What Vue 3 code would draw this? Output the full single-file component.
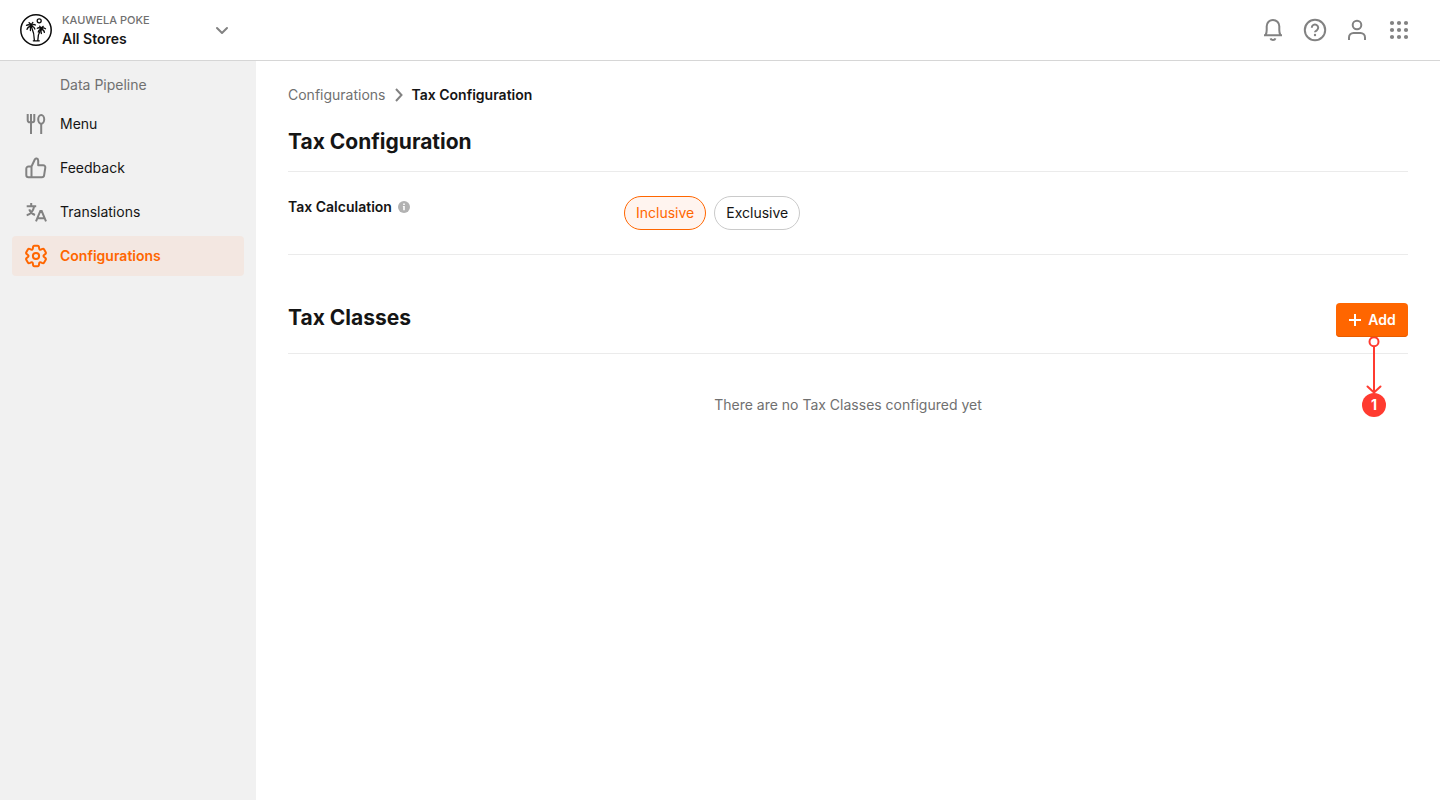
<script setup>
import { ref } from 'vue'

const calculation = ref('Inclusive')
const options = ['Inclusive', 'Exclusive']

// Six-toothed gear outline: one tooth profile rotated around the centre.
function gearPath() {
  const place = (x, y, deg) => {
    const a = (deg * Math.PI) / 180
    const px = 12 + x * Math.cos(a) - y * Math.sin(a)
    const py = 12 + x * Math.sin(a) + y * Math.cos(a)
    return `${px.toFixed(2)} ${py.toFixed(2)}`
  }
  let d = `M${place(-1.6, -10.3, 0)}`
  for (let deg = 0; deg < 360; deg += 60) {
    d += `L${place(1.6, -10.3, deg)}Q${place(2.9, -10.3, deg)} ${place(3, -8.5, deg)}`
    d += `Q${place(3, -5.2, deg)} ${place(-3, -8.5, deg + 60)}`
    d += `Q${place(-2.9, -10.3, deg + 60)} ${place(-1.6, -10.3, deg + 60)}`
  }
  return d + 'z'
}
const gear = gearPath()
</script>

<template>
  <div class="app">
    <header class="topbar">
      <button class="store" type="button">
        <svg class="logo" viewBox="0 0 32 32" width="32" height="32" fill="none" stroke="#0b0b0b" stroke-linecap="round" aria-hidden="true">
          <circle cx="16" cy="16" r="15.2" stroke-width="1.5" />
          <circle cx="19.200" cy="6.800" r="2" stroke-width="1.300" />
          <path d="M11.500 13c1.800 4 2.900 8 2.900 13.500M20.500 16c-1.800 3-2.700 6-2.700 10.500M13.300 26.800h6" stroke-width="1.300" />
          <path d="M11.300 12.300C10 10.500 8.500 10.300 6.500 11.300M11.300 12.300C9 12.300 7.500 13.300 7 15.300M11.300 12.300c-1 1.400-1.300 2.700-.9 4.200M11.300 12.300c1-1.800 2.500-2.300 4.200-1.300M11.300 12.300c2 .1 3.200 1 3.500 2.700M11.300 12.300c-.3-1.800-1.100-3-2.300-3.600M11.300 12.300c0-2 .5-3 1.500-3.800" stroke-width="1.300" />
          <path d="M21.200 15.300c-1-1.600-2.300-1.900-3.900-1M21.200 15.300c-1.800.2-2.700 1.200-2.900 2.700M21.200 15.300c-.4 1.500-.3 2.900.2 4.200M21.200 15.300c1-1.600 2.600-1.700 4.300-.6M21.200 15.300c2 .1 3 1.300 3.200 3M21.200 15.300c-.2-1.500-.7-2.500-1.500-3.100M21.200 15.300c.2-1.700.9-2.600 2-3" stroke-width="1.300" />
        </svg>
        <span class="store-text">
          <span class="brand">KAUWELA POKE</span>
          <span class="scope">All Stores</span>
        </span>
        <svg viewBox="0 0 16 16" width="16" height="16" fill="none" stroke="#828282" stroke-width="2" stroke-linecap="round" stroke-linejoin="round" aria-hidden="true"><path d="M3 6l5 5 5-5" /></svg>
      </button>
      <div class="actions">
        <button type="button" aria-label="Notifications">
          <svg viewBox="0 0 24 24"><path d="M3 17.200h18M4.700 17c.7-1.700 1-3.200 1-5V8.200a6.300 6.300 0 0 1 12.600 0V12c0 1.800.3 3.300 1 5M9.500 20.300c.8 2.100 4.200 2.100 5 0" /></svg>
        </button>
        <button type="button" aria-label="Help">
          <svg viewBox="0 0 24 24"><circle cx="12" cy="12" r="10.200" /><path d="M8.800 9.800a3.200 3.200 0 1 1 5 2.500c-1.100.7-1.800 1-1.800 2" /><circle cx="12" cy="17" r="1.200" fill="currentColor" stroke="none" /></svg>
        </button>
        <button type="button" aria-label="Account">
          <svg viewBox="0 0 24 24"><circle cx="12" cy="7" r="4.300" /><path d="M4 22v-2.500a4.500 4.500 0 0 1 4.500-4.500h7a4.500 4.500 0 0 1 4.500 4.500V22" /></svg>
        </button>
        <button type="button" aria-label="Apps">
          <svg viewBox="0 0 24 24"><g fill="currentColor" stroke="none"><template v-for="y in [5, 12, 19]" :key="y"><circle v-for="x in [5, 12, 19]" :key="x" :cx="x" :cy="y" r="2.100" /></template></g></svg>
        </button>
      </div>
    </header>

    <div class="body">
      <nav class="sidebar" aria-label="Main">
        <a class="sub" href="#">Data Pipeline</a>
        <a class="item" href="#">
          <svg viewBox="0 0 24 24"><path d="M3.700 2v6.300a2 2 0 0 0 2 2h2.600a2 2 0 0 0 2-2V2M7 2v20M17.200 12v10" /><ellipse cx="17.200" cy="7.300" rx="3" ry="4.400" /></svg>
          Menu
        </a>
        <a class="item" href="#">
          <svg viewBox="0 0 24 24" stroke-linejoin="round"><path d="M7.500 10.500v10.800M7.500 10.500l3.300-7c.6-1.700 3.400-1.200 3.400 1.200v4.500h4.900a2.200 2.200 0 0 1 2.200 2.500l-1.200 7.700a2.200 2.200 0 0 1-2.200 1.900H4.500a2.200 2.200 0 0 1-2.200-2.200v-6.400a2.200 2.200 0 0 1 2.200-2.200z" /></svg>
          Feedback
        </a>
        <a class="item" href="#">
          <svg viewBox="0 0 24 24"><path d="M2.700 6.300h9.500M7.200 3v3.300M2.700 15.200c4-.9 6.500-4 7.500-8.900M5.200 9.300c1 2.500 3 4.700 5.800 5.700M12 21.300l4.300-10.300h1.400l4.300 10.300M13.500 18.200h7" /></svg>
          Translations
        </a>
        <a class="item active" href="#" aria-current="page">
          <svg viewBox="0 0 24 24" stroke-linejoin="round"><circle cx="12" cy="12" r="3.100" /><path :d="gear" /></svg>
          Configurations
        </a>
      </nav>

      <main class="content">
        <nav class="crumbs" aria-label="Breadcrumb">
          <a href="#">Configurations</a>
          <svg viewBox="0 0 14 14" width="14" height="14" fill="none" stroke="#828282" stroke-width="2" aria-hidden="true"><path d="M4 1l5.500 6L4 13" /></svg>
          <span aria-current="page">Tax Configuration</span>
        </nav>

        <h1>Tax Configuration</h1>

        <fieldset class="setting">
          <legend class="hidden">Tax Calculation</legend>
          <div class="setting-name">
            Tax Calculation
            <svg viewBox="0 0 12 12" width="12" height="12" aria-hidden="true"><circle cx="6" cy="6" r="6" fill="#b2b2b2" /><path d="M5.200 2.400h1.600v1.500H5.200zM4.900 5h1.900v4.300H5.200V6h-.3z" fill="#fff" /></svg>
          </div>
          <div class="choices">
            <label v-for="o in options" :key="o" :class="['choice', { selected: calculation === o }]">
              <input v-model="calculation" class="hidden" type="radio" name="calculation" :value="o" />
              {{ o }}
            </label>
          </div>
        </fieldset>

        <section>
          <div class="section-head">
            <h2>Tax Classes</h2>
            <div class="add-wrap">
              <button class="add" type="button">
                <svg viewBox="0 0 14 14" width="14" height="14" fill="none" stroke="#fff" stroke-width="2" aria-hidden="true"><path d="M7 1v12M1 7h12" /></svg>
                Add
              </button>
              <div class="marker">
                <svg viewBox="0 0 24 58" width="24" height="58" fill="none" stroke="#ff3b30" stroke-width="2" stroke-linecap="round" stroke-linejoin="round" aria-hidden="true"><path d="M12 9v46M5.500 49.500l6.500 6 6.500-6" /><circle cx="12" cy="4.700" r="4.500" fill="#fff" /></svg>
                <span class="step">1</span>
              </div>
            </div>
          </div>
          <p class="empty">There are no Tax Classes configured yet</p>
        </section>
      </main>
    </div>
  </div>
</template>

<style>
body {
  margin: 0;
  background: #fff;
}
</style>

<style scoped>
.app {
  display: flex;
  flex-direction: column;
  min-height: 100vh;
  font-family: Inter, "Liberation Sans", sans-serif;
  font-size: 14px;
  line-height: 20px;
  color: #151515;
}
.app * {
  box-sizing: border-box;
}
button {
  margin: 0;
  padding: 0;
  border: 0;
  background: none;
  font: inherit;
  color: inherit;
  cursor: pointer;
}
a {
  color: inherit;
  text-decoration: none;
}
svg {
  display: block;
  flex: none;
}
.hidden {
  position: absolute;
  width: 1px;
  height: 1px;
  margin: 0;
  padding: 0;
  overflow: hidden;
  opacity: 0;
}
.topbar {
  display: flex;
  justify-content: space-between;
  align-items: center;
  height: 61px;
  padding: 0 29px 0 20px;
  border-bottom: 1px solid #d6d6d6;
}
.store {
  display: flex;
  align-items: center;
  gap: 10px;
  width: 210px;
  text-align: left;
}
.store-text {
  display: flex;
  flex: 1;
  flex-direction: column;
}
.brand {
  font-size: 11px;
  font-weight: 500;
  line-height: 18px;
  color: #707070;
}
.scope {
  font-weight: 600;
}
.actions {
  display: flex;
  gap: 18px;
}
.actions button {
  color: #828282;
}
.actions svg,
.item svg {
  width: 24px;
  height: 24px;
  fill: none;
  stroke: currentColor;
  stroke-width: 2;
}
.body {
  display: flex;
  flex: 1;
}
.sidebar {
  flex: none;
  width: 256px;
  padding: 14px 12px;
  background: #f1f1f1;
}
.sub {
  display: block;
  padding: 0 48px 9px;
  color: #707070;
}
.item {
  display: flex;
  align-items: center;
  gap: 12px;
  height: 40px;
  margin-bottom: 4px;
  padding: 0 12px;
  border-radius: 4px;
}
.item svg {
  color: #828282;
}
.item.active,
.item.active svg {
  color: #ff6600;
}
.item.active {
  background: #f3e7e1;
  font-weight: 600;
}
.content {
  flex: 1;
  padding: 24px 32px;
}
.crumbs {
  display: flex;
  align-items: center;
  gap: 6px;
  color: #707070;
}
.crumbs span {
  font-weight: 600;
  color: #151515;
}
h1,
h2 {
  margin: 0;
  font-size: 21px;
  font-weight: 700;
  line-height: 30px;
}
h1 {
  margin-top: 22px;
  padding-bottom: 14px;
  border-bottom: 1px solid #ebebeb;
}
.setting {
  display: grid;
  grid-template-columns: 3fr 7fr;
  min-width: 0;
  margin: 0;
  padding: 24px 0;
  border: 0;
  border-bottom: 1px solid #ebebeb;
}
.setting-name {
  display: flex;
  align-items: center;
  align-self: start;
  gap: 6px;
  height: 22px;
  font-weight: 600;
}
.choices {
  display: flex;
  gap: 8px;
}
.choice {
  position: relative;
  padding: 6px 11px;
  border: 1px solid #cacaca;
  border-radius: 17px;
  cursor: pointer;
}
.choice.selected {
  border-color: #ff6600;
  background: #fff4ef;
  color: #ff6600;
}
.section-head {
  display: flex;
  justify-content: space-between;
  margin-top: 48px;
  padding-bottom: 16px;
  border-bottom: 1px solid #ebebeb;
}
.add-wrap {
  position: relative;
}
.add {
  display: flex;
  align-items: center;
  justify-content: center;
  gap: 6px;
  min-width: 72px;
  height: 34px;
  padding: 0 12px;
  border-radius: 4px;
  background: #ff6600;
  box-shadow: inset 0 -1px #e65c00;
  color: #fff;
  font-weight: 600;
}
.marker {
  position: absolute;
  top: 34px;
  right: 22px;
  width: 24px;
}
.step {
  position: absolute;
  top: 56px;
  left: 0;
  width: 24px;
  height: 24px;
  border-radius: 50%;
  background: #ff3b30;
  color: #fff;
  font-weight: 700;
  line-height: 24px;
  text-align: center;
}
.empty {
  margin: 41px 0 0;
  text-align: center;
  color: #707070;
}
</style>
